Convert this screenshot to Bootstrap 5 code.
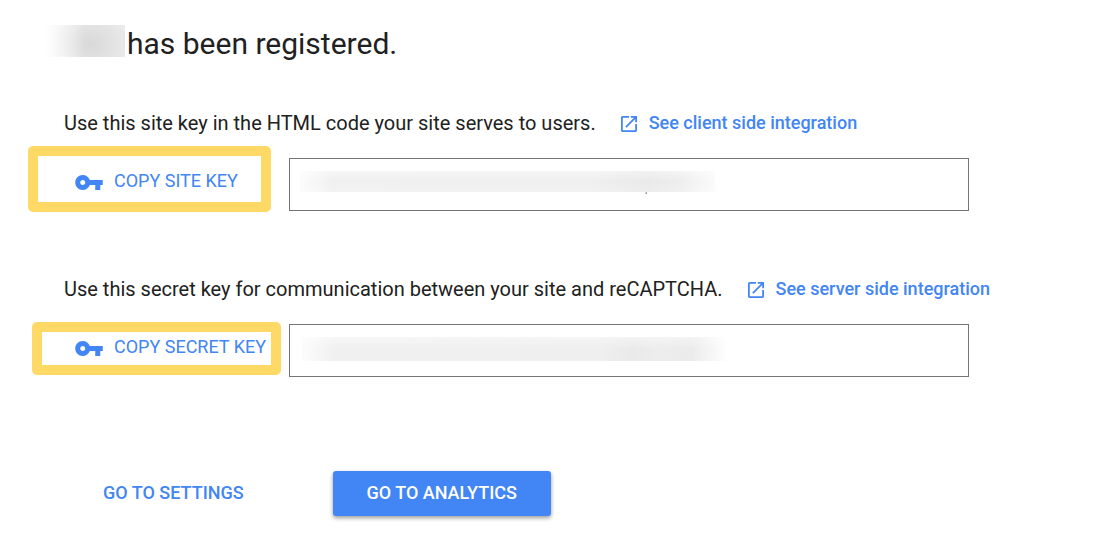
<!DOCTYPE html>
<html lang="en">
<head>
<meta charset="utf-8">
<meta name="viewport" content="width=device-width, initial-scale=1">
<title>Site registered</title>
<link href="https://cdn.jsdelivr.net/npm/bootstrap@5.3.0/dist/css/bootstrap.min.css" rel="stylesheet">
<style>
  :root { --accent: #4285f4; --ink: #212121; --marker: #ffd966; }
  body { font-family: "Google Sans", Roboto, sans-serif; color: var(--ink); background: #fff; }
  .page { padding: 25px 64px 32px; }
  .title { font-size: 30px; line-height: 38px; margin: 0 0 46px -20px; }
  .hidden-name { width: 81px; height: 32px; margin-right: 2px;
    background: linear-gradient(90deg, #fff, #fff0 50%), radial-gradient(ellipse 56px 44px at 46px 19px, #d8d8d8, #e5e5e5 50%, #f3f3f3); }
  .key-block { margin-bottom: 64px; }
  .key-head { font-size: 20px; line-height: 28px; column-gap: 25px; margin-bottom: 21px; }
  .doc-link { color: var(--accent); font-size: 18px; font-weight: 500; gap: 12px; }
  .copy svg { margin-top: 3px; }
  .doc-link svg { margin-top: 2px; }
  .key-action { flex: 0 0 225px; }
  .text-action { color: var(--accent); font-size: 18px; line-height: 24px; font-weight: 400; border: 0; border-radius: 0; }
  .text-action:hover { color: #1a73e8; }
  .copy { padding: 11px; gap: 11px; }
  .marker { position: absolute; border: 10px solid var(--marker); border-radius: 5px; pointer-events: none; }
  .marker-site { inset: -12px 18px -1px -36px; }
  .marker-secret { inset: -2px 8px 2px -32px; }
  .key-field { max-width: 680px; height: 53px; border: 1px solid #757575; border-radius: 0; background-color: #fff; background-repeat: no-repeat; }
  .field-site { background-image: linear-gradient(120deg, #fff, #777), linear-gradient(#fff6, #fff0 50%, #fff3), linear-gradient(90deg, #fcfcfc, #f0f0f0 8%, #efefef 70%, #e9e9e9 84%, #eee 92%, #fbfbfb); background-position: 355px 33px, 10px 12px, 10px 12px; background-size: 2px 2px, 415px 21px, 415px 21px; }
  .field-secret { background-image: linear-gradient(#fff6, #fff0 50%), linear-gradient(90deg, #fcfcfc, #f0f0f0 8%, #efefef 70%, #eaeaea 78%, #ededed 84%, #ebebeb 92%, #fefefe); background-position: 12px 12px; background-size: 424px 24px; }
  .actions { column-gap: 57px; padding-top: 30px; }
  .settings { padding: 9px 32px 11px 39px; font-weight: 500; }
  .analytics { width: 218px; padding: 9px 8px 11px; color: #fff; background: var(--accent); border-radius: 3px; font-weight: 500; font-size: 18px; line-height: 25px; border: 0; box-shadow: 0 2px 4px rgba(0,0,0,.4); }
  .analytics:hover { color: #fff; background: #3367d6; }
</style>
</head>
<body>
<main class="page">
  <h1 class="title d-flex align-items-start fw-normal">
    <span class="hidden-name" aria-hidden="true"></span>
    <span>has been registered.</span>
  </h1>

  <section class="key-block">
    <div class="key-head d-flex flex-wrap align-items-center">
      <label for="siteKey">Use this site key in the HTML code your site serves to users.</label>
      <a class="doc-link d-inline-flex align-items-center text-decoration-none" href="#client">
        <svg width="16" height="16" viewBox="3 3 18 18" fill="currentColor" aria-hidden="true"><path d="M19 19H5V5h7V3H5c-1.11 0-2 .9-2 2v14c0 1.1.89 2 2 2h14c1.1 0 2-.9 2-2v-7h-2v7zM14 3v2h3.59l-9.83 9.83 1.41 1.41L19 6.41V10h2V3h-7z"/></svg>
        <span>See client side integration</span>
      </a>
    </div>
    <div class="d-flex">
      <div class="key-action position-relative">
        <button type="button" class="btn text-action copy d-flex align-items-center text-nowrap">
          <svg width="28" height="15" viewBox="1 6 22 12" fill="currentColor" aria-hidden="true"><path d="M12.65 10C11.83 7.67 9.61 6 7 6c-3.31 0-6 2.69-6 6s2.69 6 6 6c2.61 0 4.83-1.67 5.65-4H17v4h4v-4h2v-4H12.65zM7 14c-1.1 0-2-.9-2-2s.9-2 2-2 2 .9 2 2-.9 2-2 2z"/></svg>
          <span>COPY SITE KEY</span>
        </button>
        <span class="marker marker-site"></span>
      </div>
      <input id="siteKey" type="text" class="form-control key-field field-site" readonly>
    </div>
  </section>

  <section class="key-block">
    <div class="key-head d-flex flex-wrap align-items-center">
      <label for="secretKey">Use this secret key for communication between your site and reCAPTCHA.</label>
      <a class="doc-link d-inline-flex align-items-center text-decoration-none" href="#server">
        <svg width="16" height="16" viewBox="3 3 18 18" fill="currentColor" aria-hidden="true"><path d="M19 19H5V5h7V3H5c-1.11 0-2 .9-2 2v14c0 1.1.89 2 2 2h14c1.1 0 2-.9 2-2v-7h-2v7zM14 3v2h3.59l-9.83 9.83 1.41 1.41L19 6.41V10h2V3h-7z"/></svg>
        <span>See server side integration</span>
      </a>
    </div>
    <div class="d-flex">
      <div class="key-action position-relative">
        <button type="button" class="btn text-action copy d-flex align-items-center text-nowrap">
          <svg width="28" height="15" viewBox="1 6 22 12" fill="currentColor" aria-hidden="true"><path d="M12.65 10C11.83 7.67 9.61 6 7 6c-3.31 0-6 2.69-6 6s2.69 6 6 6c2.61 0 4.83-1.67 5.65-4H17v4h4v-4h2v-4H12.65zM7 14c-1.1 0-2-.9-2-2s.9-2 2-2 2 .9 2 2-.9 2-2 2z"/></svg>
          <span>COPY SECRET KEY</span>
        </button>
        <span class="marker marker-secret"></span>
      </div>
      <input id="secretKey" type="text" class="form-control key-field field-secret" readonly>
    </div>
  </section>

  <div class="actions d-flex flex-wrap align-items-center">
    <button type="button" class="btn text-action settings">GO TO SETTINGS</button>
    <button type="button" class="btn analytics">GO TO ANALYTICS</button>
  </div>
</main>
<script src="https://cdn.jsdelivr.net/npm/bootstrap@5.3.0/dist/js/bootstrap.bundle.min.js"></script>
</body>
</html>
